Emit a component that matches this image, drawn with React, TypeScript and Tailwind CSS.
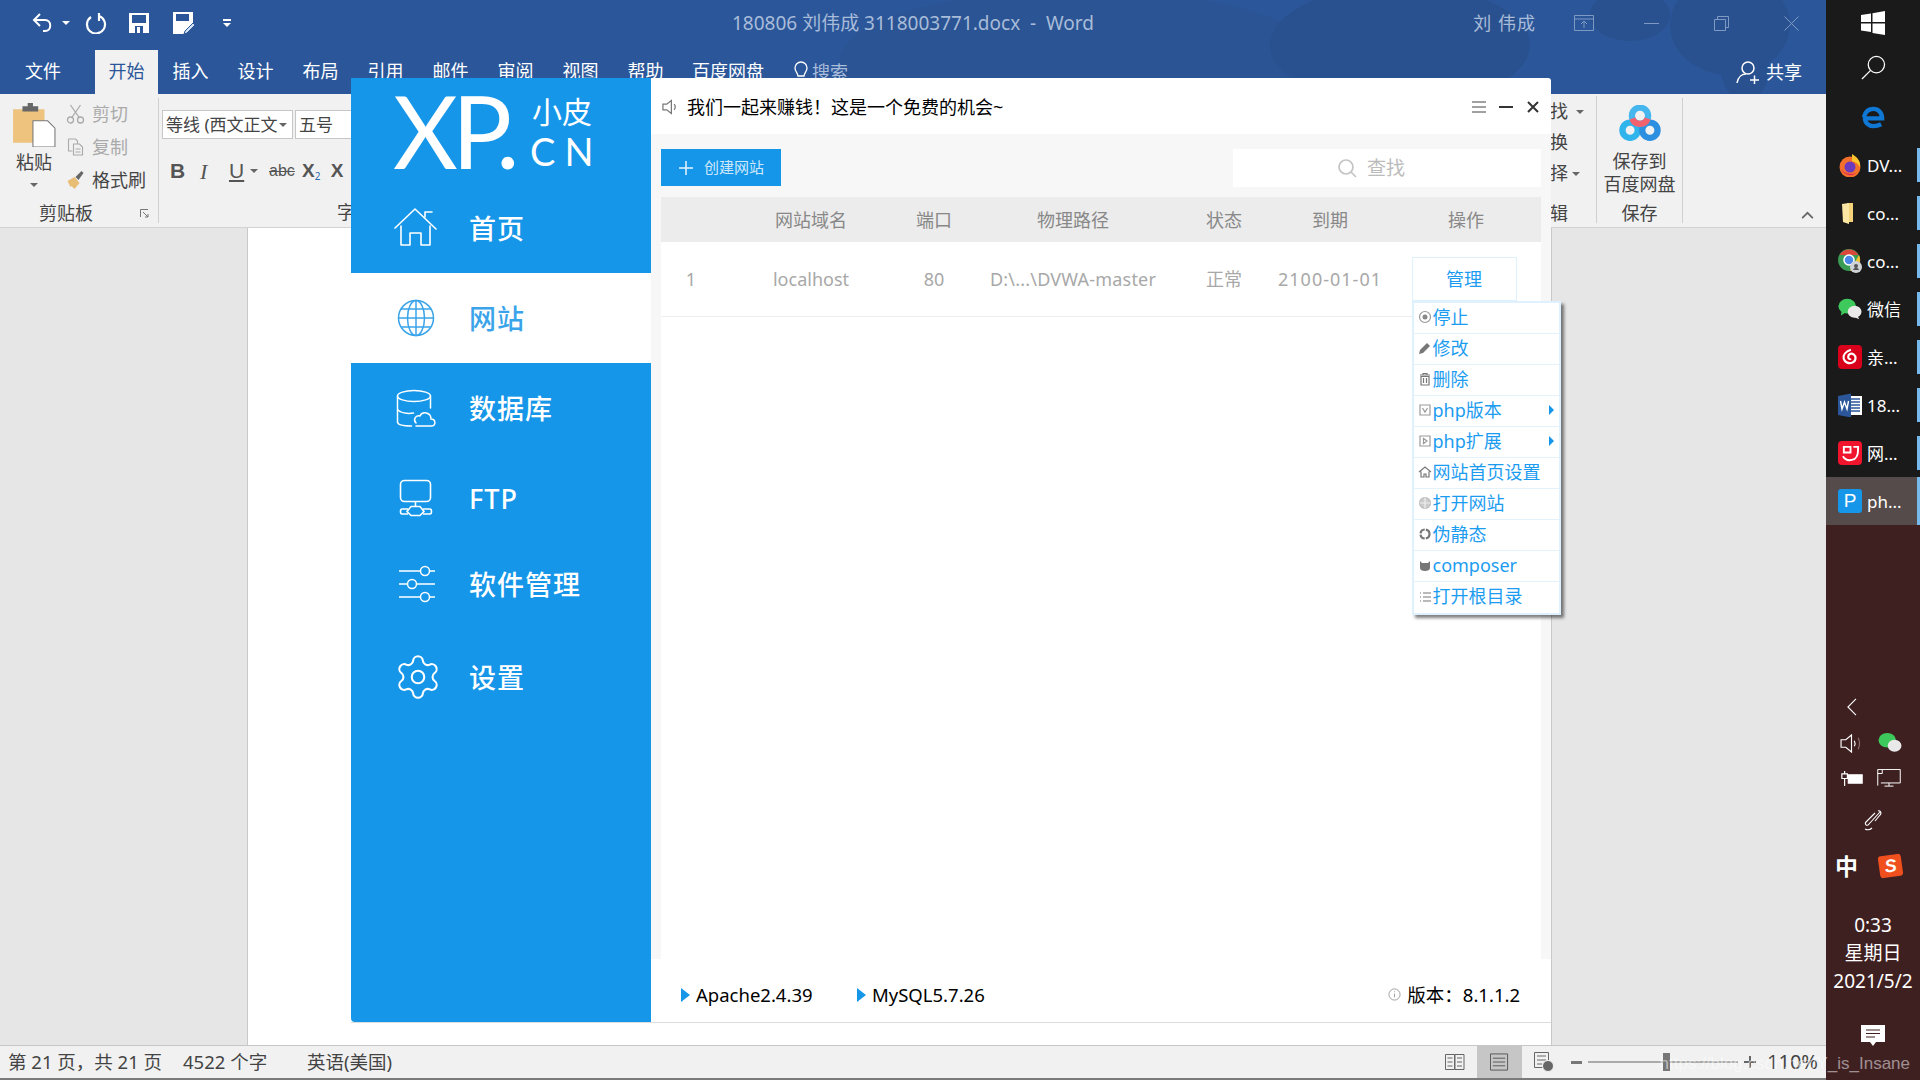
import type { ReactNode } from "react";
import { Settings } from "lucide-react";

const tabs = [
  { label: "文件", w: "w-[86px] mr-[9px]" },
  { label: "开始", w: "w-[63px]", active: true },
  { label: "插入", w: "w-[65px]" },
  { label: "设计", w: "w-[65px]" },
  { label: "布局", w: "w-[65px]" },
  { label: "引用", w: "w-[65px]" },
  { label: "邮件", w: "w-[65px]" },
  { label: "审阅", w: "w-[65px]" },
  { label: "视图", w: "w-[65px]" },
  { label: "帮助", w: "w-[65px]" },
  { label: "百度网盘", w: "w-[100px]" },
];

const HomeIcon = () => (
  <svg viewBox="0 0 44 40" className="w-[44px] h-[40px]" fill="none" stroke="white" strokeWidth="1.6" strokeLinejoin="round" strokeLinecap="round">
    <path d="M1 20 21 1l21 20" />
    <path d="M31 9V4h7" />
    <path d="M7 18v19h9V25h11v12h9V18" />
  </svg>
);

const GlobeIcon = () => (
  <svg viewBox="0 0 38 38" className="w-[38px] h-[38px]" fill="none" stroke="#3aa4ea" strokeWidth="1.5">
    <circle cx="19" cy="19" r="17.5" />
    <ellipse cx="19" cy="19" rx="8.5" ry="17.5" />
    <path d="M19 1.5v35M1.5 19h35M4 10h30M4 28h30" />
  </svg>
);

const DbIcon = () => (
  <svg viewBox="0 0 40 38" className="w-[40px] h-[38px]" fill="none" stroke="white" strokeWidth="1.5" strokeLinecap="round">
    <ellipse cx="18" cy="7" rx="16.5" ry="5.5" />
    <path d="M1.5 7v26c0 3 4 4 14 4M34.5 7v12M1.5 20c2 4 10 5 16 4" />
    <path d="M20 37h16c4 0 4-7-1-7 0-7-9-8-11-3-5-1-7 4-4 7" />
  </svg>
);

const FtpIcon = () => (
  <svg viewBox="0 0 34 38" className="w-[34px] h-[38px]" fill="none" stroke="white" strokeWidth="1.6">
    <rect x="1.5" y="1.5" width="30" height="21" rx="4" />
    <path d="M16.5 22.5v5M9 30H3c-2 0-2 5 0 5h6M24 30h7c2 0 2 5 0 5h-7" />
    <path d="M12 27.5h9l4 5-4 4h-9l-4-4z" />
  </svg>
);

const SlidersIcon = () => (
  <svg viewBox="0 0 38 38" className="w-[38px] h-[38px] ml-[2px]" fill="none" stroke="white" strokeWidth="1.5">
    <path d="M1 6h22M31 6h6M1 19h9M18 19h19M1 32h22M31 32h6" />
    <circle cx="27" cy="6" r="4.5" />
    <circle cx="14" cy="19" r="4.5" />
    <circle cx="27" cy="32" r="4.5" />
  </svg>
);

const navItems: { label: string; icon: ReactNode; h: string; active?: boolean }[] = [
  { label: "首页", icon: <HomeIcon />, h: "h-[90px]" },
  { label: "网站", icon: <GlobeIcon />, h: "h-[90px]", active: true },
  { label: "数据库", icon: <DbIcon />, h: "h-[90px]" },
  { label: "FTP", icon: <FtpIcon />, h: "h-[90px]" },
  { label: "软件管理", icon: <SlidersIcon />, h: "h-[82px]" },
  { label: "设置", icon: <Settings size={50} strokeWidth={1} className="ml-[3px]" />, h: "h-[104px]" },
];

const MiniIcon = ({ kind }: { kind: string }) => (
  <svg viewBox="0 0 14 14" className="w-[14px] h-[14px] shrink-0" fill="none" stroke="#999" strokeWidth="1.2">
    {kind === "stop" && (
      <>
        <circle cx="7" cy="7" r="5.5" />
        <circle cx="7" cy="7" r="2.5" fill="#888" stroke="none" />
      </>
    )}
    {kind === "edit" && <path d="M1 13l1-4 7-7 3 3-7 7z" fill="#777" stroke="none" />}
    {kind === "trash" && <path d="M2 3h10M5 3V1.5h4V3M3 4.5h8V13H3zM5.500 6v5M8.500 6v5" stroke="#777" />}
    {kind === "ver" && <path d="M2 2h10v10H2zM4.500 5l2.500 4 2.500-4" />}
    {kind === "ext" && <path d="M2 2h10v10H2zM5.500 4.500v5l3.500-2.500z" />}
    {kind === "home" && <path d="M1 7l6-5 6 5M3 6.500V12h3V9h2v3h3V6.500" stroke="#777" />}
    {kind === "globe" && (
      <>
        <circle cx="7" cy="7" r="5.500" fill="#ccc" stroke="#bbb" />
        <path d="M1.500 7h11M7 1.500v11" stroke="#eee" />
      </>
    )}
    {kind === "rewrite" && <circle cx="7" cy="7" r="4.500" stroke="#777" strokeWidth="2.200" strokeDasharray="6 1.200" />}
    {kind === "composer" && <path d="M2 3l2 2h6l2-2v7c0 2-2 3-5 3s-5-1-5-3z" fill="#777" stroke="none" />}
    {kind === "list" && <path d="M2 3h1M5 3h8M2 7h1M5 7h8M2 11h1M5 11h8" stroke="#777" />}
  </svg>
);

const menuItems = [
  { label: "停止", kind: "stop" },
  { label: "修改", kind: "edit" },
  { label: "删除", kind: "trash" },
  { label: "php版本", kind: "ver", sub: true },
  { label: "php扩展", kind: "ext", sub: true },
  { label: "网站首页设置", kind: "home" },
  { label: "打开网站", kind: "globe" },
  { label: "伪静态", kind: "rewrite" },
  { label: "composer", kind: "composer" },
  { label: "打开根目录", kind: "list" },
];

const Caret = ({ className = "" }: { className?: string }) => (
  <span className={`inline-block w-0 h-0 border-x-[4px] border-x-transparent border-t-[4px] border-t-[#666] ${className}`} />
);

const Triangle = () => (
  <span className="inline-block w-0 h-0 border-y-[7px] border-y-transparent border-l-[9px] border-l-[#1596e8] mr-[6px]" />
);

const colClass = "grid grid-cols-[60px_180px_66px_212px_90px_122px_1fr] items-center text-center text-[18px]";

const SoftwareWindow = () => (
  <div className="absolute left-[351px] top-[78px] w-[1200px] h-[945px] flex rounded-t-[3px] z-10 border-b border-[#ddd]">
    <aside className="w-[300px] bg-[#1596e9] text-white flex flex-col rounded-bl-[4px]">
      <div className="h-[105px] flex items-start pl-[42px]">
        <span className="font-['Lato',sans-serif] font-normal text-[100px] leading-[106px] w-[136px] tracking-[-6px] mt-[-1px]">XP.</span>
        <div className="flex flex-col ml-[3px] mt-[17px]">
          <span className="text-[30px] leading-[34px]">小皮</span>
          <span className="font-['Lato',sans-serif] text-[38px] leading-[40px] tracking-[9px] mt-[2px] ml-[-2px]">CN</span>
        </div>
      </div>
      {navItems.map((n) => (
        <div
          key={n.label}
          className={`${n.h} flex items-center ${n.active ? "bg-white text-[#3aa4ea]" : ""}`}
        >
          <div className="w-[118px] flex justify-center pl-[12px] shrink-0">{n.icon}</div>
          <span className="text-[27px] tracking-[1px] leading-none font-medium">{n.label}</span>
        </div>
      ))}
    </aside>

    <main className="flex-1 bg-white flex flex-col rounded-tr-[3px]">
      <div className="h-[56px] flex items-center pl-[11px] pr-[12px] pt-[2px] shrink-0">
        <svg viewBox="0 0 16 18" className="w-[15px] h-[18px] mr-[10px]" fill="none" stroke="#777" strokeWidth="1.3">
          <path d="M1 6h4l5-4v14l-5-4H1zM13 6c1.500 2 1.500 4 0 6" />
        </svg>
        <span className="text-[18px] text-black">我们一起来赚钱！这是一个免费的机会~</span>
        <div className="ml-auto flex items-center gap-[12px]">
          <svg viewBox="0 0 16 14" className="w-[16px] h-[14px]" stroke="#444" strokeWidth="1.200">
            <path d="M1 2h14M1 7h14M1 12h14" />
          </svg>
          <div className="w-[14px] h-[2.500px] bg-[#333]" />
          <svg viewBox="0 0 12 12" className="w-[12px] h-[12px] ml-[2px]" stroke="#333" strokeWidth="2">
            <path d="M1 1l10 10M11 1L1 11" />
          </svg>
        </div>
      </div>

      <div className="flex-1 bg-[#f7f7f7] px-[10px] pt-[15px] flex flex-col">
        <div className="flex justify-between items-start h-[48px]">
          <button className="w-[120px] h-[37px] bg-[#1596e9] flex items-center justify-center gap-[10px] text-[#cfe8f9] text-[15px]">
            <svg viewBox="0 0 16 16" className="w-[16px] h-[16px]" stroke="#e8f5fd" strokeWidth="1.500">
              <path d="M8 1v14M1 8h14" />
            </svg>
            创建网站
          </button>
          <div className="w-[308px] h-[38px] bg-white flex items-center justify-center gap-[10px] pr-[32px] text-[19px] text-[#bbb]">
            <svg viewBox="0 0 20 20" className="w-[20px] h-[20px]" fill="none" stroke="#c4c4c4" strokeWidth="1.700">
              <circle cx="9" cy="9" r="7" />
              <path d="M14 14l5 5" />
            </svg>
            查找
          </div>
        </div>
        <div className={`${colClass} h-[45px] pt-[2px] bg-[#ececec] text-[#888]`}>
          <span />
          <span>网站域名</span>
          <span>端口</span>
          <span>物理路径</span>
          <span>状态</span>
          <span>到期</span>
          <span>操作</span>
        </div>
        <div className="flex-1 bg-white">
          <div className={`${colClass} h-[75px] border-b border-[#eee] text-[#a8a8a8]`}>
            <span>1</span>
            <span>localhost</span>
            <span>80</span>
            <span className="tracking-[0.2px]">D:\...\DVWA-master</span>
            <span>正常</span>
            <span className="tracking-[1px]">2100-01-01</span>
            <div className="flex justify-center">
              <div className="relative mr-[4px]">
                <div className="w-[105px] h-[44px] border border-[#dff1fd] flex items-center justify-center text-[#1c9cf0]">管理</div>
                <div className="absolute top-full left-0 w-[149px] bg-white border-2 border-[#dff1fd] shadow-[3px_3px_3px_rgba(0,0,0,0.5)] z-20 text-left">
                  {menuItems.map((m) => (
                    <div key={m.label} className="h-[31px] flex items-center pl-[4px] pb-[2px] gap-[1px] border-b border-[#e3f2fb] last:border-b-0 text-[18px] text-[#1c9cf0] relative">
                      <MiniIcon kind={m.kind} />
                      <span>{m.label}</span>
                      {m.sub && (
                        <span className="ml-auto mr-[5px] w-0 h-0 border-y-[5px] border-y-transparent border-l-[5px] border-l-[#1596e8]" />
                      )}
                    </div>
                  ))}
                </div>
              </div>
            </div>
          </div>
        </div>
      </div>

      <div className="h-[63px] flex items-center pl-[30px] pr-[31px] pt-[8px] text-[18.5px] text-black shrink-0">
        <Triangle />
        <span className="w-[161px]">Apache2.4.39</span>
        <Triangle />
        <span>MySQL5.7.26</span>
        <svg viewBox="0 0 14 14" className="w-[13px] h-[13px] ml-auto mr-[6px]" fill="none" stroke="#999" strokeWidth="1">
          <circle cx="7" cy="7" r="6" />
          <path d="M7 6v4M7 3.500v1" />
        </svg>
        <span>版本：8.1.1.2</span>
      </div>
    </main>
  </div>
);

const Clipboard = () => (
  <div className="w-[159px] border-r border-[#d0d0d0] my-[4px] flex flex-col shrink-0">
    <div className="flex-1 flex">
      <div className="w-[66px] flex flex-col items-center pl-[2px] pt-[5px]">
        <svg viewBox="0 0 42 42" className="w-[44px] h-[44px]">
          <path d="M1 6h30v32H1z" fill="#edc37e" />
          <path d="M10 3h5V0h5v3h5v5H10z" fill="#666" />
          <path d="M20 17h14l7 7v18H20z" fill="#fff" stroke="#777" strokeWidth="1" />
        </svg>
        <span className="text-[18px] leading-[22px] mt-[4px] text-[#444]">粘贴</span>
        <Caret className="mt-[10px]" />
      </div>
      <div className="flex flex-col text-[18px] leading-[32px]">
        <div className="flex items-center gap-[7px] text-[#aaa] h-[32px]">
          <svg viewBox="0 0 18 20" className="w-[19px] h-[20px]" fill="none" stroke="#aaa" strokeWidth="1.300">
            <path d="M4 1l9 13M14 1L5 14" />
            <circle cx="4" cy="16" r="3" />
            <circle cx="14" cy="16" r="3" />
          </svg>
          剪切
        </div>
        <div className="flex items-center gap-[7px] text-[#aaa] h-[33px]">
          <svg viewBox="0 0 18 20" className="w-[19px] h-[20px]" fill="none" stroke="#aaa" strokeWidth="1.100">
            <path d="M2 2h7l2 2v3M2 2v12h4M7 7h6l3 3v8H7zM9 12h5M9 15h5" />
          </svg>
          复制
        </div>
        <div className="flex items-center gap-[7px] text-[#444] h-[34px]">
          <svg viewBox="0 0 18 20" className="w-[19px] h-[20px]">
            <path d="M1 11l7-4 5 6-5 6-3-3-1 1z" fill="#e8bd75" />
            <path d="M9 7l6-6 2 2-5 7z" fill="#666" />
          </svg>
          格式刷
        </div>
      </div>
    </div>
    <div className="h-[28px] flex items-center relative text-[18px] text-[#444] pt-[5px]">
      <span className="w-[132px] text-center">剪贴板</span>
      <svg viewBox="0 0 9 9" className="w-[9px] h-[9px] ml-[8px]" fill="none" stroke="#777" strokeWidth="1">
        <path d="M.5 8V.5H8M3 3l5 5M5 8h3V5" />
      </svg>
    </div>
  </div>
);

const FontGroup = () => (
  <div className="w-[400px] my-[4px] flex flex-col pl-[3px] shrink-0">
    <div className="flex pt-[12px] gap-[2px]">
      <div className="w-[131px] h-[29px] bg-white border border-[#c6c6c6] flex items-center pl-[3px] text-[17px] text-[#444] overflow-hidden">
        <span className="w-[112px] overflow-hidden whitespace-nowrap">等线 (西文正文)</span>
        <Caret className="ml-[1px]" />
      </div>
      <div className="w-[60px] h-[29px] bg-white border border-[#c6c6c6] flex items-center pl-[3px] text-[17px] text-[#444]">五号</div>
    </div>
    <div className="flex items-center mt-[17px] h-[30px] pl-[8px] text-[#555]">
      <span className="font-['Liberation_Sans',sans-serif] font-bold text-[21px] w-[30px]">B</span>
      <span className="font-['Liberation_Serif',serif] italic text-[22px] w-[29px]">I</span>
      <span className="font-['Liberation_Sans',sans-serif] underline text-[21px] w-[21px]">U</span>
      <Caret className="mr-[11px]" />
      <span className="font-['Liberation_Sans',sans-serif] line-through text-[16px] w-[33px]">abc</span>
      <span className="font-['Liberation_Sans',sans-serif] font-bold text-[19px]">X</span>
      <span className="text-[10px] text-[#2b6cb0] mt-[10px] w-[16px]">2</span>
      <span className="font-['Liberation_Sans',sans-serif] font-bold text-[19px]">X</span>
    </div>
    <div className="flex-1 flex items-end pl-[175px] text-[18px] text-[#444] mb-[-3px]">字体</div>
  </div>
);

const EditSaveGroups = () => (
  <div className="ml-auto flex shrink-0 h-full">
    <div className="w-[48px] my-[4px] border-r border-[#d0d0d0] pl-[1px] flex flex-col text-[18px] text-[#444] leading-[31px] mt-[2px]">
      <div className="flex items-center gap-[8px]">找<Caret /></div>
      <div>换</div>
      <div className="flex items-center gap-[4px]">择<Caret /></div>
      <div className="mt-[9px] text-[18px]">辑</div>
    </div>
    <div className="w-[86px] my-[4px] border-r border-[#d0d0d0] flex flex-col items-center text-[#444]">
      <svg viewBox="0 0 44 40" className="w-[42px] h-[36px] mt-[7px]" fill="none" strokeWidth="7">
        <circle cx="11" cy="28" r="8.500" stroke="#2fb4ec" />
        <circle cx="33" cy="28" r="8.500" stroke="#2c8fe0" />
        <circle cx="22" cy="12" r="9" stroke="#45b6ee" />
        <path d="M13.500 15a9 9 0 0 0 17 0" stroke="#f3616f" />
      </svg>
      <span className="text-[18px] leading-[23px] mt-[9px]">保存到</span>
      <span className="text-[18px] leading-[23px] whitespace-nowrap">百度网盘</span>
      <span className="text-[18px] leading-[20px] mt-[7px]">保存</span>
    </div>
    <div className="w-[143px] flex items-end justify-center pb-[8px] pl-[105px]">
      <svg viewBox="0 0 14 9" className="w-[13px] h-[8px]" fill="none" stroke="#666" strokeWidth="2">
        <path d="M1 8l6-6 6 6" />
      </svg>
    </div>
  </div>
);

const WordWindow = () => (
  <div className="w-[1826px] h-full flex flex-col shrink-0">
    <div className="relative h-[94px] bg-[#2b579a] overflow-hidden shrink-0 flex flex-col">
      <svg viewBox="0 0 1826 94" className="absolute inset-0 w-full h-full" fill="#29518f">
        <ellipse cx="1080" cy="60" rx="240" ry="70" opacity="0.6" />
        <ellipse cx="1400" cy="45" rx="130" ry="60" />
        <ellipse cx="1630" cy="15" rx="40" ry="26" />
        <ellipse cx="1730" cy="25" rx="60" ry="50" />
        <ellipse cx="1745" cy="70" rx="24" ry="30" />
      </svg>
      <div className="relative h-[50px] flex items-center pl-[31px] pb-[4px]">
        <svg viewBox="0 0 24 22" className="w-[24px] h-[22px]" fill="none" stroke="white" strokeWidth="2">
          <path d="M9 2L3 8l6 6M3 8h11c7 0 7 11 0 11h-2" />
        </svg>
        <Caret className="ml-[7px] border-t-white" />
        <svg viewBox="0 0 22 22" className="w-[22px] h-[22px] ml-[15px]" fill="none" stroke="white" strokeWidth="2.200">
          <path d="M6 5a9 9 0 1 0 8-1M14 1v7h-1" />
        </svg>
        <svg viewBox="0 0 20 20" className="w-[20px] h-[20px] ml-[22px]">
          <path d="M0 0h20v20H0z" fill="white" />
          <path d="M3 2h14v8H3zM6 13h8v7H6z" fill="#2b579a" />
          <path d="M8 14h3v6H8z" fill="white" />
        </svg>
        <svg viewBox="0 0 22 24" className="w-[22px] h-[24px] ml-[24px]" fill="none">
          <path d="M0 1h20v13l-8 9H0z" fill="white" />
          <path d="M3 3h13v7H3z" fill="#2b579a" />
          <path d="M20 12l-8 8-1 3 3-1 8-8z" fill="#cfe0f5" stroke="#2b579a" />
        </svg>
        <div className="ml-[28px] flex flex-col items-center gap-[2px]">
          <div className="w-[8px] h-[2px] bg-white" />
          <Caret className="border-t-white" />
        </div>
        <div className="absolute left-0 right-0 top-0 h-[50px] pb-[4px] flex items-center justify-center text-[19px] text-[#a9bcd9]">
          180806 刘伟成 3118003771.docx&nbsp;&nbsp;-&nbsp;&nbsp;Word
        </div>
        <div className="ml-auto flex items-center text-[#a9bcd9] relative">
          <span className="text-[18px] tracking-[1px] mr-[38px]">刘 伟成</span>
          <svg viewBox="0 0 20 16" className="w-[20px] h-[16px] mr-[50px]" fill="none" stroke="#7f9ac2" strokeWidth="1">
            <path d="M.5.500h19v15H.5zM.5 4h19M10 13V6M7 9l3-3 3 3" />
          </svg>
          <div className="w-[15px] h-px bg-[#7f9ac2] mr-[55px]" />
          <svg viewBox="0 0 15 15" className="w-[15px] h-[15px] mr-[55px]" fill="none" stroke="#7f9ac2">
            <path d="M.5 3.500h11v11H.5zM3.500 3.500v-3h11v11h-3" />
          </svg>
          <svg viewBox="0 0 15 15" className="w-[15px] h-[15px] mr-[27px]" stroke="#7f9ac2">
            <path d="M.5.500l14 14M14.500.500l-14 14" />
          </svg>
        </div>
      </div>
      <div className="relative h-[44px] flex items-stretch text-[18px] text-white">
        {tabs.map((t) => (
          <div
            key={t.label}
            className={`${t.w} flex items-center justify-center shrink-0 pb-[1px] ${t.active ? "bg-[#f1f1f1] text-[#2b579a]" : ""}`}
          >
            {t.label}
          </div>
        ))}
        <div className="flex items-center gap-[3px] ml-[15px] text-[#a9bcd9]">
          <svg viewBox="0 0 16 22" className="w-[16px] h-[22px]" fill="none" stroke="white" strokeWidth="1.300">
            <path d="M5 15c0-3-3-4-3-8a6 6 0 0 1 12 0c0 4-3 5-3 8zM6 18h4" />
          </svg>
          搜索
        </div>
        <div className="ml-auto flex items-center gap-[6px] pr-[24px]">
          <svg viewBox="0 0 24 24" className="w-[24px] h-[24px]" fill="none" stroke="white" strokeWidth="1.500">
            <circle cx="12" cy="8" r="6" />
            <path d="M1 23c1-6 5-9 9-9M14 20h9M18.500 15.500v9" />
          </svg>
          <span>共享</span>
        </div>
      </div>
    </div>

    <div className="h-[134px] bg-[#f1f1f1] border-b border-[#d2d2d2] flex shrink-0 overflow-hidden">
      <Clipboard />
      <FontGroup />
      <EditSaveGroups />
    </div>

    <div className="flex-1 flex bg-[#e6e6e6]">
      <div className="w-[248px] border-r border-[#c9c9c9]" />
      <div className="w-[1304px] bg-white border-r border-[#c9c9c9]" />
    </div>

    <div className="h-[35px] bg-[#f1f1f1] border-t border-[#c6c6c6] border-b-2 border-b-[#7b7b7b] flex items-center pl-[8px] text-[18.5px] text-[#444] shrink-0">
      <span className="w-[175px] whitespace-nowrap">第 21 页，共 21 页</span>
      <span className="w-[124px]">4522 个字</span>
      <span>英语(美国)</span>
      <div className="ml-auto flex items-center h-full">
        <svg viewBox="0 0 20 18" className="w-[20px] h-[18px]" fill="none" stroke="#666">
          <path d="M.5 1.500h9v15h-9zM10 1.500h9v15h-9zM2.500 5h5M2.500 9h5M2.500 13h5M12 5h5M12 9h5M12 13h5" />
        </svg>
        <div className="w-[45px] h-full bg-[#c6c6c6] ml-[12px] flex items-center justify-center">
          <svg viewBox="0 0 20 18" className="w-[19px] h-[18px]" fill="none" stroke="#555">
            <path d="M.5.500h18v17H.5zM3 5h13M3 9h13M3 13h13" />
          </svg>
        </div>
        <svg viewBox="0 0 20 20" className="w-[20px] h-[20px] ml-[12px]" fill="none" stroke="#666">
          <path d="M.5.500h14v15H.5zM3 4h9M3 8h9M3 12h5" />
          <circle cx="14" cy="14" r="5.500" fill="#666" stroke="#f1f1f1" />
        </svg>
        <div className="w-[11px] h-[3px] bg-[#777] ml-[17px]" />
        <div className="relative w-[150px] h-[2px] bg-[#aaa] ml-[6px]">
          <div className="absolute left-[75px] top-[-8px] w-[7px] h-[18px] bg-[#777]" />
        </div>
        <svg viewBox="0 0 12 12" className="w-[12px] h-[12px] ml-[6px]" stroke="#666" strokeWidth="2">
          <path d="M6 0v12M0 6h12" />
        </svg>
        <span className="text-[20px] w-[52px] text-right ml-[10px] mr-[8px]">110%</span>
      </div>
    </div>
  </div>
);

const WinIcon = () => (
  <svg viewBox="0 0 24 24" className="w-[24px] h-[24px]" fill="white">
    <path d="M0 4l10-1.500V11H0zM11.500 2.300 24 0v11H11.500zM0 12.500h10V21L0 19.500zM11.500 12.500H24V24l-12.500-2z" />
  </svg>
);

const appItems: { label: string; icon: ReactNode; active?: boolean }[] = [
  {
    label: "DV...",
    icon: (
      <svg viewBox="0 0 24 24" className="w-[24px] h-[24px]">
        <circle cx="12" cy="14" r="10.500" fill="#f3702b" />
        <path d="M14 1c5 3 9 7 8 13-2-3-4-5-8-6z" fill="#fdc42c" />
        <circle cx="12" cy="14" r="5.500" fill="#6b3bbf" />
        <path d="M2 12c1 7 8 11 16 8-4 4-14 3-16-8z" fill="#e0245e" />
      </svg>
    ),
  },
  {
    label: "co...",
    icon: (
      <svg viewBox="0 0 24 24" className="w-[24px] h-[24px]">
        <path d="M9 2h6v19H9z" fill="#f3d27a" />
        <path d="M4 3l7-1v21l-6-2z" fill="#fbe6a3" />
      </svg>
    ),
  },
  {
    label: "co...",
    icon: (
      <svg viewBox="0 0 24 24" className="w-[24px] h-[24px]">
        <circle cx="11" cy="11" r="11" fill="#3a9b55" />
        <path d="M1.500 6a11 11 0 0 1 19 0H11z" fill="#d9483b" />
        <path d="M21 6a11 11 0 0 1-9 16l5-9z" fill="#f2c12e" />
        <circle cx="11" cy="11" r="5" fill="#4a88e8" stroke="white" strokeWidth="1.500" />
        <circle cx="18" cy="18" r="6" fill="#cfd3d8" />
        <circle cx="18" cy="17" r="2" fill="#555" />
        <path d="M15 21c1-3 5-3 6 0z" fill="#555" />
      </svg>
    ),
  },
  {
    label: "微信",
    icon: (
      <svg viewBox="0 0 26 24" className="w-[24px] h-[24px]">
        <ellipse cx="10" cy="9" rx="9.500" ry="8" fill="#3ec95c" />
        <path d="M4 14l-1 5 5-3z" fill="#3ec95c" />
        <ellipse cx="18" cy="15" rx="7.500" ry="6.500" fill="#e9e9e9" />
        <path d="M21 19l2 4-5-2z" fill="#e9e9e9" />
      </svg>
    ),
  },
  {
    label: "亲...",
    icon: (
      <div className="w-[24px] h-[24px] rounded-[4px] bg-[#d9001b] flex items-center justify-center">
        <svg viewBox="0 0 20 20" className="w-[18px] h-[18px]" fill="none" stroke="white" strokeWidth="2.400">
          <path d="M11 2C5 4 2 8 3 12c1 4 6 6 10 4 4-2 4-7 1-9-3-2-6 0-6 3 0 2 2 3 3 2" />
        </svg>
      </div>
    ),
  },
  {
    label: "18...",
    icon: (
      <svg viewBox="0 0 24 24" className="w-[24px] h-[24px]">
        <path d="M10 3h14v19H10z" fill="white" />
        <path d="M13 6h9M13 9h9M13 12h9M13 15h9M13 18h9" stroke="#2b579a" strokeWidth="1.600" />
        <path d="M0 3l13-2.500v24L0 22z" fill="#2b579a" />
        <path d="M2.500 8l1.500 8 2.500-7 2.500 7 1.500-8" fill="none" stroke="white" strokeWidth="1.400" />
      </svg>
    ),
  },
  {
    label: "网...",
    icon: (
      <div className="w-[24px] h-[24px] rounded-[4px] bg-[#f0142d] flex items-center justify-center">
        <svg viewBox="0 0 20 20" className="w-[19px] h-[19px]" fill="none" stroke="white" strokeWidth="2">
          <path d="M3 3h7v6H3zM13 3h5c0 6 0 10-4 13M2 13c3 5 7 5 12 3" />
        </svg>
      </div>
    ),
  },
  {
    label: "ph...",
    active: true,
    icon: (
      <div className="w-[24px] h-[24px] rounded-[3px] bg-[#1596e9] text-white flex items-center justify-center text-[19px] font-['Liberation_Sans',sans-serif]">P</div>
    ),
  },
];

const Taskbar = () => (
  <div className="flex-1 h-full bg-[#3f2021] flex flex-col text-white">
    <div className="bg-[#1a1a1a] flex flex-col shrink-0">
      <div className="h-[44px] flex items-center justify-center pt-[1px]">
        <WinIcon />
      </div>
      <div className="h-[46px] flex items-center justify-center">
        <svg viewBox="0 0 26 26" className="w-[25px] h-[25px]" fill="none" stroke="white" strokeWidth="1.300">
          <circle cx="16" cy="10" r="8.500" />
          <path d="M10 16L1 25" />
        </svg>
      </div>
      <div className="h-[51px] flex items-center justify-center pt-[3px]">
        <svg viewBox="0 0 24 24" className="w-[23px] h-[23px]" fill="none" stroke="#0f78d4" strokeWidth="4.500">
          <path d="M3 13h18c0-6-4-10-9-10-6 0-9 4-10 9M3 12c0 6 4 9 9 9 3 0 6-1 8-2" />
        </svg>
      </div>
      {appItems.map((a, i) => (
        <div key={i} className={`h-[48px] flex items-center pl-[12px] relative ${a.active ? "bg-[#554b4b]" : ""}`}>
          {a.icon}
          <span className="ml-[5px] text-[17px] leading-none">{a.label}</span>
          <div className={`absolute right-0 w-[3px] bg-[#76b9ed] ${a.active ? "top-0 bottom-0" : "top-[7px] bottom-[7px]"}`} />
        </div>
      ))}
    </div>

    <div className="flex-1 flex flex-col items-center pt-[173px]">
      <svg viewBox="0 0 12 20" className="w-[11px] h-[18px] mb-[9px] self-start ml-[20px]" fill="none" stroke="white" strokeWidth="1.200">
        <path d="M11 1L2 10l9 9" />
      </svg>
      <div className="w-full h-[36px] flex items-center pl-[14px] gap-[15px]">
        <svg viewBox="0 0 24 20" className="w-[23px] h-[19px]" fill="none" stroke="white" strokeWidth="1.200">
          <path d="M1 6h5l6-5v18l-6-5H1z" />
          <path d="M15 7c1 2 1 4 0 6" />
          <path d="M19 4c2 4 2 8 0 12" stroke="#8a7070" />
        </svg>
        <svg viewBox="0 0 26 24" className="w-[24px] h-[22px]">
          <ellipse cx="10" cy="9" rx="9.500" ry="8" fill="#3ec95c" />
          <ellipse cx="18" cy="15" rx="7.500" ry="6.500" fill="#e9e9e9" />
        </svg>
      </div>
      <div className="w-full h-[34px] flex items-center pl-[14px] gap-[13px]">
        <svg viewBox="0 0 26 18" className="w-[24px] h-[17px]" fill="none" stroke="white" strokeWidth="1.300">
          <path d="M5 1v3M2 4h6v5H2zM5 9v8" />
          <path d="M9 5h15v9H9z" fill="white" />
        </svg>
        <svg viewBox="0 0 26 20" className="w-[24px] h-[18px]" fill="none" stroke="white" strokeWidth="1.100">
          <path d="M.5.500h25v15H4M.5.500v18M.5 5h5M5.500.500V5M8 19h10M13 15.500V19" />
        </svg>
      </div>
      <div className="h-[46px] mt-[3px] flex items-center">
        <svg viewBox="0 0 20 22" className="w-[20px] h-[22px]" fill="none" stroke="white" strokeWidth="1.100">
          <path d="M17 2L6 14c-2 3-5 0-3-2l9-9M15 1c2-1 4 2 2 4l-5 6M9 18c-2 2-5 2-7 1" />
        </svg>
      </div>
      <div className="w-full h-[50px] flex items-center pl-[9px] gap-[21px] mt-[-3px]">
        <span className="text-[23px] font-bold leading-none text-white [text-shadow:0_0_1px_black]">中</span>
        <div className="w-[23px] h-[22px] rounded-[3px] bg-[#f0501e] rotate-[-8deg] flex items-center justify-center font-['Liberation_Sans',sans-serif] font-bold italic text-[18px] text-white leading-none">S</div>
      </div>
      <div className="flex flex-col items-center text-[19px] leading-[28px] mt-[20px] whitespace-nowrap">
        <span>0:33</span>
        <span>星期日</span>
        <span>2021/5/2</span>
      </div>
      <svg viewBox="0 0 24 22" className="w-[24px] h-[22px] mt-[30px]" fill="white">
        <path d="M0 0h24v17h-9l-3 4-3-4H0z" />
        <path d="M5 5h14M5 8.500h14M5 12h9" stroke="#3f2021" strokeWidth="1.200" />
      </svg>
    </div>
  </div>
);

export default function App() {
  return (
    <div className="relative w-[1920px] h-[1080px] flex overflow-hidden font-['Noto_Sans','Noto_Sans_CJK_SC',sans-serif]">
      <WordWindow />
      <Taskbar />
      <SoftwareWindow />
      <div className="absolute right-[10px] bottom-[8px] text-[17px] leading-none font-['Liberation_Sans',sans-serif] text-white/50 z-20">
        https://blog.csdn.net/Y_is_Insane
      </div>
    </div>
  );
}
